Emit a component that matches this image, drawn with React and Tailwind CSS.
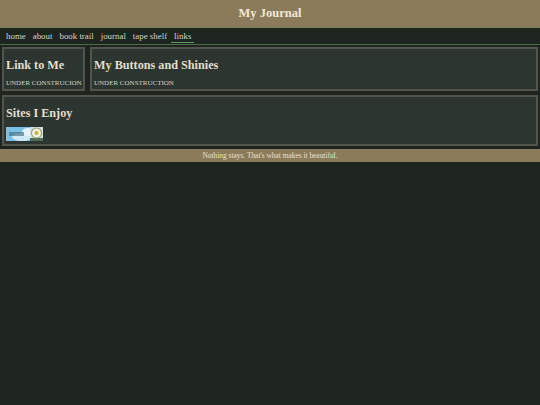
import React from 'react';

const serif = "font-['Liberation_Serif',serif]";

const navItems = ['home', 'about', 'book trail', 'journal', 'tape shelf', 'links'];

const Panel = ({ title, className, children }) => (
  <section className={`border-2 border-[#54554a] bg-[#2c352f] px-[2px] ${className}`}>
    <h2 className="mt-[8px] text-[12.2px] leading-[16px] font-bold text-[#e2dfcf]">{title}</h2>
    {children}
  </section>
);

const Badge = () => (
  <svg width="37" height="14" viewBox="0 0 37 14" className="block">
    <rect width="37" height="14" fill="#7cc0e6" />
    <ellipse cx="16" cy="10" rx="10" ry="4" fill="#cfe8f6" />
    <ellipse cx="22" cy="5" rx="6" ry="4" fill="#e6f3fa" />
    <rect x="24" y="0" width="13" height="14" fill="#cfe2dc" />
    <rect x="24" y="11" width="13" height="3" fill="#4d6b55" />
    <rect x="3" y="5" width="15" height="4" fill="#3d6478" opacity="0.6" />
    <circle cx="30.5" cy="6" r="5.5" fill="#8f9a78" />
    <circle cx="30.5" cy="6" r="4.5" fill="#f1f0dc" />
    <circle cx="30.5" cy="6" r="2" fill="#c9ad45" />
  </svg>
);

export default function App() {
  return (
    <div className={`min-h-[405px] bg-[#1e241f] ${serif}`}>
      <header className="flex h-[28px] items-center justify-center border-b border-[#76805a] bg-[#8c7b5a]">
        <h1 className="text-[12.5px] font-bold text-[#eee9d8]">My Journal</h1>
      </header>

      <nav className="box-content flex h-[16px] items-center gap-[1px] border-b border-[#4c6a45] px-[3px] text-[8.9px] text-[#d6d4c6]">
        {navItems.map((item) => (
          <a
            key={item}
            className={`px-[3px] leading-[12px] ${item === 'links' ? 'border-b border-[#5f9a63]' : ''}`}
          >
            {item}
          </a>
        ))}
      </nav>

      <div className="flex gap-[5px] px-[2px] pt-[2px]">
        <Panel title="Link to Me" className="h-[44px] w-[83px] shrink-0">
          <p className="mt-[6px] text-[7px] leading-[9px] whitespace-nowrap text-[#d6d4c6]">UNDER CONSTRUCION</p>
        </Panel>
        <Panel title="My Buttons and Shinies" className="h-[44px] flex-1">
          <p className="mt-[6px] text-[7px] leading-[9px] whitespace-nowrap text-[#d6d4c6]">UNDER CONSTRUCTION</p>
        </Panel>
      </div>

      <div className="mt-[4px] px-[2px]">
        <Panel title="Sites I Enjoy" className="h-[51px]">
          <div className="mt-[6px]">
            <Badge />
          </div>
        </Panel>
      </div>

      <footer className="mt-[3px] flex h-[13px] items-center justify-center bg-[#8c7b5a] text-[7.4px] text-[#e6e1cf]">
        Nothing stays. That's what makes it beautiful.
      </footer>
    </div>
  );
}
